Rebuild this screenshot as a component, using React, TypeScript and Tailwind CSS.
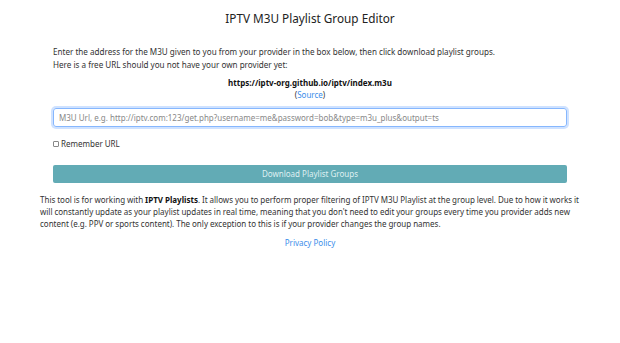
import React, { useState } from 'react';

const App = () => {
  const [url, setUrl] = useState('');
  const [remember, setRemember] = useState(false);

  return (
    <div className="min-h-screen bg-white text-[#333] font-['Noto_Sans',sans-serif]">
      <div className="w-[538px] mx-auto pt-[9px]">
        {/* Header */}
        <h1 className="text-center text-[11.75px] leading-[18px] text-[#222]">
          IPTV M3U Playlist Group Editor
        </h1>

        {/* Form */}
        <div className="px-[12px] mt-[18px]">
          <p className="text-[8.1px] leading-[13px]">
            Enter the address for the M3U given to you from your provider in the box below, then click download playlist groups.
            <br />
            Here is a free URL should you not have your own provider yet:
          </p>
          <div className="text-center mt-[6px] text-[8px] leading-[12px]">
            <div className="font-bold text-[#111]">https://iptv-org.github.io/iptv/index.m3u</div>
            <div>
              (<a href="#" className="text-[#3b8eea]">Source</a>)
            </div>
          </div>

          <input
            value={url}
            onChange={(e) => setUrl(e.target.value)}
            placeholder="M3U Url, e.g. http://iptv.com:123/get.php?username=me&password=bob&type=m3u_plus&output=ts"
            className="mt-[7px] w-full h-[19px] px-[5px] text-[8px] border border-[#86b7fe] rounded-[3px] shadow-[0_0_0_2px_rgba(13,110,253,0.2)] outline-none placeholder:text-[#888]"
          />

          <label className="flex items-center gap-[2px] mt-[11px] text-[8px] leading-[12px]">
            <input
              type="checkbox"
              checked={remember}
              onChange={(e) => setRemember(e.target.checked)}
              className="appearance-none w-[6px] h-[6px] m-0 border border-[#888] rounded-[1px] bg-white"
            />
            Remember URL
          </label>

          <button
            disabled
            className="mt-[15px] w-full h-[18px] rounded-[2px] bg-[#62abb5] text-[#dff0f2] text-[8px]"
          >
            Download Playlist Groups
          </button>
        </div>

        {/* Description */}
        <p className="mt-[11px] -mx-[1px] text-[8px] leading-[12px] [word-spacing:-0.15px]">
          This tool is for working with <b className="text-[#111]">IPTV Playlists</b>. It allows you to perform proper filtering of IPTV M3U Playlist at the group level. Due to how it works it will constantly update as your playlist updates in real time, meaning that you don't need to edit your groups every time you provider adds new content (e.g. PPV or sports content). The only exception to this is if your provider changes the group names.
        </p>

        <div className="text-center mt-[7px] text-[8px] leading-[12px]">
          <a href="#" className="text-[#3b8eea]">Privacy Policy</a>
        </div>
      </div>
    </div>
  );
};

export default App;
